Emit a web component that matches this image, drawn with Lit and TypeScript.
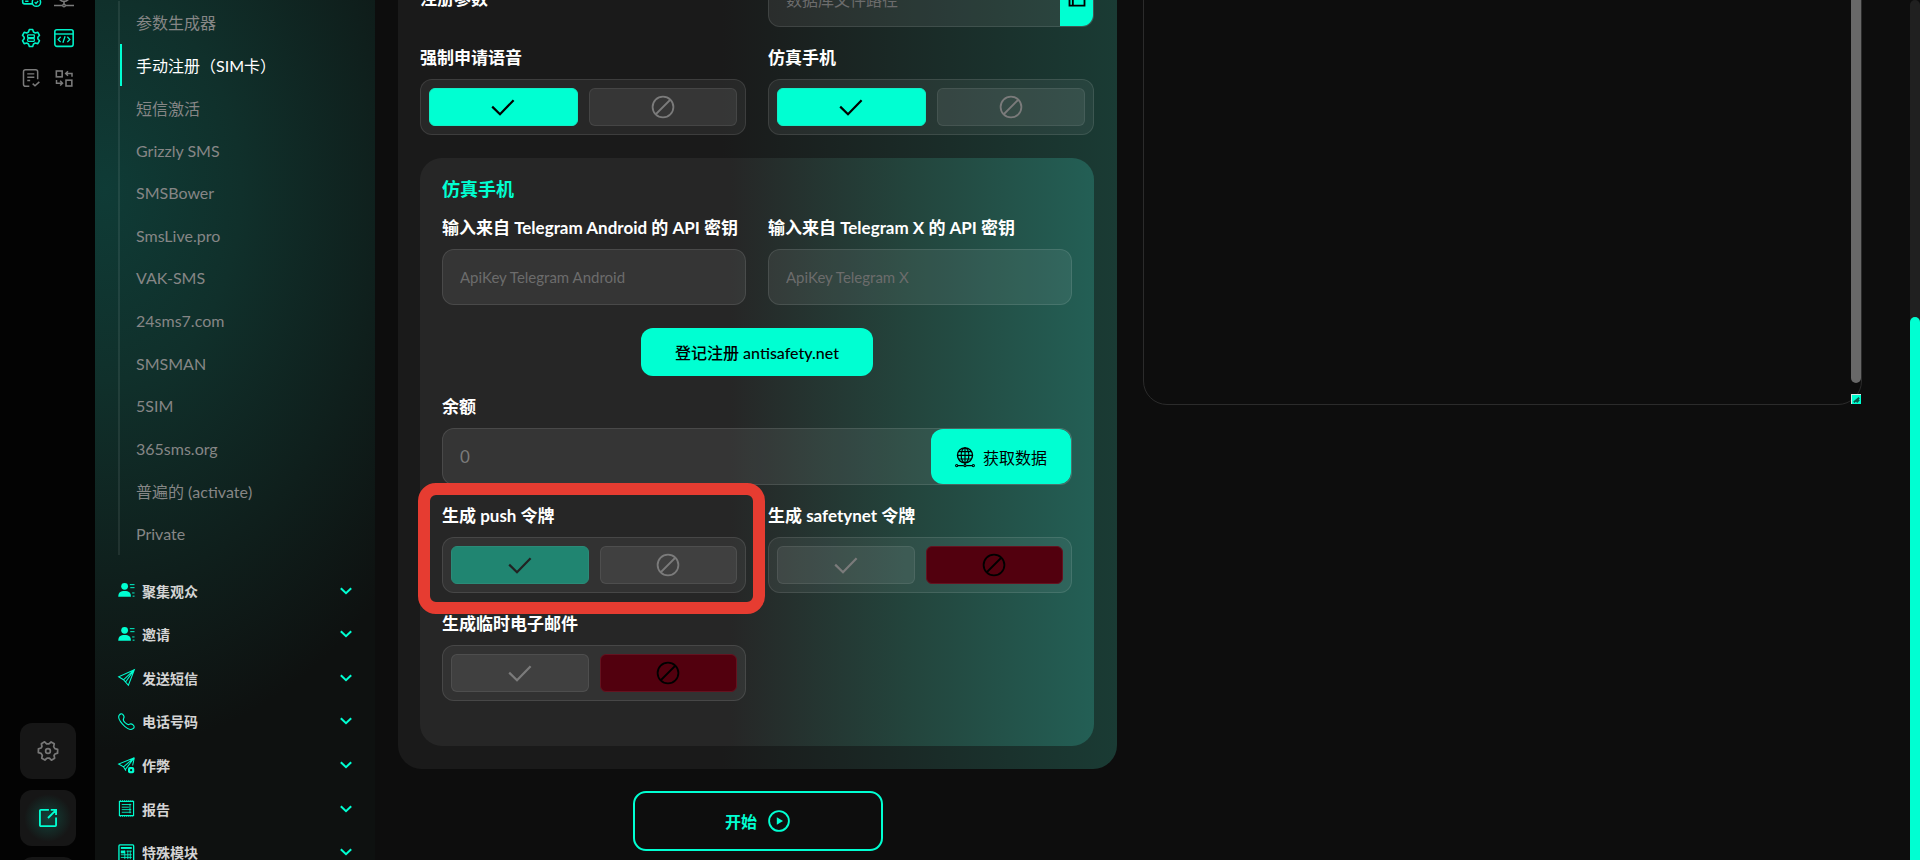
import { LitElement, html, css, svg } from "lit";
import { customElement, state } from "lit/decorators.js";
import { classMap } from "lit/directives/class-map.js";

const icon = (body: unknown, cls = "", box = "0 0 24 24") =>
  html`<svg class=${"icon " + cls} viewBox=${box} aria-hidden="true">${body}</svg>`;

const check = svg`<path d="M1.2 11.6 L9 19.2 L22.6 5.2" stroke-width="2.2"/>`;
const ban = svg`<circle cx="12" cy="12" r="10.4" stroke-width="1.8"/><path d="M5 19 L19 5" stroke-width="1.8"/>`;
const user = svg`<circle class="solid" cx="7" cy="4.6" r="3.6"/><path class="solid" d="M.3 15.5 C.3 11.3 2.6 9.6 7 9.6 S13.7 11.3 13.7 15.5 Z"/><path d="M12.5 2.8H17.5M13 6H17.5M15 11.6H17.5M15.5 15H17.5" stroke-width="1"/>`;
const plane = svg`<path d="M17.3 .7 L.7 8.2 L5.8 11.4 L11 17.2 Z M17.3 .7 L5.8 11.4 M17.3 .7 L8 13.8" stroke-width="1.1"/>`;
const phone = svg`<path d="M1 2.6 C2.4 .6 4 .4 5 1.5 C6.6 3.2 7 4.3 6 5.6 C5 6.9 5.2 7.7 7.2 9.9 C9.6 12.3 10.6 12.9 12 12 C13.4 11 14.4 11.2 16.2 12.8 C17.6 14.2 17.4 15.6 15.6 16.8 C12.8 18.4 8.2 15.8 4.8 11.8 C1.6 8.2 .1 4.6 1 2.6 Z" stroke-width="1.2"/>`;
const planeLock = svg`<path d="M17.3 .7 L.7 7.4 L5.8 10.4 L8.4 14.4 M17.3 .7 L5.8 10.4 M17.3 .7 L8 13 M17.3 .7 L15.5 9" stroke-width="1.1"/><rect class="solid" x="10.6" y="10.6" width="6.6" height="6.6" rx="2"/><circle cx="13.9" cy="13.9" r="1.2" class="hole"/>`;
const report = svg`<rect x="1.5" y="1.5" width="15" height="15" stroke-width="1.2"/><path d="M2 .7H16M2 17.3H16" stroke-width=".9" stroke-dasharray="1.2 1"/><path d="M4 4.8H14M4 7.6H11.5M4 10.2H14M4 13H14M12.7 4V14" stroke-width=".9"/>`;
const modules = svg`<rect x="1" y="1" width="15.6" height="18" rx="1" stroke-width="1.4"/><path d="M3 4.2H14.6" stroke-width="2"/><path d="M3 8.4H7.5" stroke-width="3"/><path d="M9 7.6H14.6M3 11.4H14.6M3 14.2H14.6M10.4 7V16M13 7V16M7.2 7V16" stroke-width=".9"/>`;
const chevron = svg`<path d="M.8 1.2 L6 6.2 L11.2 1.2" stroke-width="2"/>`;
const cog = "M10 1.8 L14 1.8 L15 4.8 L17.2 6 L20.2 5.2 L22.2 8.8 L20.2 11 L20.2 13 L22.2 15.2 L20.2 18.8 L17.2 18 L15 19.2 L14 22.2 L10 22.2 L9 19.2 L6.8 18 L3.8 18.8 L1.8 15.2 L3.8 13 L3.8 11 L1.8 8.8 L3.8 5.2 L6.8 6 L9 4.8 Z";
const card = svg`<rect x="2" y="4" width="19" height="15" rx="2.5" stroke-width="1.9"/><path d="M2 13H12M5 16H9" stroke-width="1.7"/><circle class="back" cx="18.5" cy="17" r="5" stroke-width="1.8"/><path d="M16.4 17 L18 18.6 L20.6 15.6" stroke-width="1.5"/>`;
const network = svg`<circle cx="12" cy="9" r="7" stroke-width="1.9"/><path d="M12 16V21M0 21H10M14 21H24" stroke-width="1.8"/><circle cx="12" cy="21" r="1.7" stroke-width="1.4"/>`;
const gearServer = svg`<path d=${cog} stroke-width="1.9" stroke-linejoin="round"/><rect x="8" y="8.2" width="8" height="3.4" rx=".6" stroke-width="1.5"/><rect x="8" y="12.6" width="8" height="3.4" rx=".6" stroke-width="1.5"/>`;
const code = svg`<rect x="1" y="2" width="22" height="20" rx="2.5" stroke-width="1.9"/><path d="M1 7.2H23" stroke-width="1.7"/><path d="M8 10.5 L5 13.8 L8 17 M16 10.5 L19 13.8 L16 17 M13.3 10 L10.7 17.6" stroke-width="1.6"/>`;
const docCheck = svg`<path d="M10 22H5.5A2.5 2.5 0 0 1 3 19.5V4.5A2.5 2.5 0 0 1 5.5 2H17.5A2.5 2.5 0 0 1 20 4.5V13.5" stroke-width="1.8"/><path d="M7.5 7H16M7.5 11H16M7.5 15H11" stroke-width="1.7"/><path d="M14 18.8 L16.8 21.4 L22 16.6" stroke-width="1.8"/>`;
const swap = svg`<rect x="2.8" y="3.6" width="7" height="7" stroke-width="1.9"/><rect x="14.4" y="14.6" width="7" height="7" stroke-width="1.9"/><path d="M21.6 10.4V6.6H14.4M16.8 3.8 L14 6.6 L16.8 9.4 M3 14.4V18.2H10M7.4 15.4 L10.2 18.2 L7.4 21" stroke-width="1.8"/>`;
const gear = svg`<g transform="rotate(30 12 12)"><path d=${cog} stroke-width="1.9" stroke-linejoin="round"/></g><circle cx="12" cy="12" r="2.6" stroke-width="1.8"/>`;
const external = svg`<path d="M13 3.2H4.2A1 1 0 0 0 3.2 4.2V19.8A1 1 0 0 0 4.2 20.8H19.8A1 1 0 0 0 20.8 19.8V11.5M15 3.2H20.8V8.8M20.4 3.6 L12 12" stroke-width="2"/>`;
const globe = svg`<circle cx="12" cy="10" r="9" stroke-width="1.7"/><ellipse cx="12" cy="10" rx="4.6" ry="9" stroke-width="1.4"/><path d="M12 1V22M3 10H21M4.4 5.6H19.6M4.4 14.4H19.6" stroke-width="1.4"/><path d="M3.5 22.3H10.5M13.5 22.3H20.5" stroke-width="1.5"/><circle cx="2" cy="22.3" r="1.3" stroke-width="1.3"/><circle cx="12" cy="22.3" r="1.3" stroke-width="1.3"/><circle cx="22" cy="22.3" r="1.3" stroke-width="1.3"/>`;
const play = svg`<circle cx="12" cy="12" r="10.8" stroke-width="2"/><path class="solid" d="M9.6 7.8 L16.4 12 L9.6 16.2 Z"/>`;
const folder = svg`<path d="M3 4H9L11 7H21V20H3Z M7 20V10H22" stroke-width="2.2"/>`;

const shared = css`
  *, *::before, *::after { box-sizing: border-box; }
  .icon { fill: none; stroke: currentColor; display: block; flex: none; overflow: visible; }
  .solid { fill: currentColor; stroke: none; }
  .hole { fill: #0d1716; stroke: none; }
  .back { fill: #030303; }
  button { font: inherit; color: inherit; background: none; border: 0; padding: 0; cursor: pointer; }
  a { color: inherit; text-decoration: none; }
`;

@customElement("icon-rail")
class IconRail extends LitElement {
  static styles = [shared, css`
    :host { display: flex; flex-direction: column; justify-content: space-between; background: #030303; overflow: hidden; }
    .shortcuts { display: grid; grid-template-columns: repeat(2, 22px); column-gap: 11px; row-gap: 18px; margin: -13px 0 0 20px; }
    .shortcuts button { height: 22px; display: grid; place-items: center; color: #7b7b7b; }
    .shortcuts .on { color: #00f0c8; }
    .shortcuts .icon { width: 20px; height: 20px; }
    .bottom { display: flex; flex-direction: column; gap: 11px; align-items: center; margin-bottom: -53px; }
    .tile { width: 56px; height: 56px; border-radius: 12px; background: #161616; color: #777; display: grid; place-items: center; }
    .tile .icon { width: 22px; height: 22px; }
    .tile.on { color: #00ffd2; background: radial-gradient(circle, #134139 0, #161616 60%); }
  `];
  render() {
    const top = [
      ["银行卡", card, true], ["网络", network, false],
      ["服务器", gearServer, true], ["代码", code, true],
      ["任务", docCheck, false], ["转换", swap, false],
    ] as const;
    return html`
      <div class="shortcuts">${top.map(([name, body, on]) => html`
        <button aria-label=${name} class=${classMap({ on })}>${icon(body)}</button>`)}</div>
      <div class="bottom">
        <button class="tile" aria-label="设置">${icon(gear)}</button>
        <button class="tile on" aria-label="打开">${icon(external)}</button>
        <button class="tile" aria-label="更多"></button>
      </div>`;
  }
}

@customElement("side-menu")
class SideMenu extends LitElement {
  static styles = [shared, css`
    :host {
      display: block; overflow: hidden;
      background: radial-gradient(400px 560px at 10px 190px, #0f3b36 0, #10302b 34%, #0f1f1c 70%, #0e1110 100%);
    }
    ul { list-style: none; margin: 0; padding: 0; display: grid; grid-auto-rows: 1fr; }
    .sub { height: 554px; margin: 1px 24px 0 23px; border-left: 2px solid rgba(255, 255, 255, .08); }
    .sub a { display: flex; align-items: center; height: 100%; padding-left: 14px; border-left: 2px solid transparent; font-size: 16px; color: #868686; }
    .sub .active { color: #fff; border-left-color: #00ffd2; }
    .groups { height: 305px; margin: 14px 23px 0; }
    .groups button { display: flex; align-items: center; gap: 7px; width: 100%; height: 100%; font-size: 14px; font-weight: 700; color: #d4d4d4; text-align: left; }
    .groups .icon { width: 17px; height: 17px; color: #00ffd2; }
    .groups span { flex: 1; }
    .groups .chev { width: 12px; height: 8px; }
  `];
  render() {
    const sub = ["参数生成器", "手动注册（SIM卡）", "短信激活", "Grizzly SMS", "SMSBower", "SmsLive.pro", "VAK-SMS",
      "24sms7.com", "SMSMAN", "5SIM", "365sms.org", "普遍的 (activate)", "Private"];
    const groups = [["聚集观众", user], ["邀请", user], ["发送短信", plane], ["电话号码", phone],
      ["作弊", planeLock], ["报告", report], ["特殊模块", modules]] as const;
    return html`
      <ul class="sub">${sub.map((t, i) => html`<li><a href="#" class=${classMap({ active: i === 1 })}>${t}</a></li>`)}</ul>
      <ul class="groups">${groups.map(([t, g]) => html`
        <li><button>${icon(g, "", "0 0 18 18")}<span>${t}</span>${icon(chevron, "chev", "0 0 12 8")}</button></li>`)}</ul>`;
  }
}

@customElement("yes-no")
class YesNo extends LitElement {
  static properties = { label: {}, value: { type: Boolean }, dim: { type: Boolean } };
  declare label: string;
  declare value: boolean;
  declare dim: boolean;
  static styles = [shared, css`
    :host { display: block; }
    .name { font-size: 17px; line-height: 24px; font-weight: 700; color: #fff; margin-bottom: 9px; white-space: nowrap; }
    .box { display: grid; grid-template-columns: 1fr 1fr; gap: 11px; height: 56px; padding: 8px; border: 1px solid rgba(255, 255, 255, .1); border-radius: 12px; background: rgba(255, 255, 255, .06); }
    label { position: relative; display: grid; place-items: center; border: 1px solid rgba(255, 255, 255, .08); border-radius: 6px; background: rgba(255, 255, 255, .07); color: #7b7b7b; cursor: pointer; }
    input { position: absolute; inset: 0; margin: 0; opacity: 0; width: 100%; height: 100%; cursor: inherit; }
    .icon { width: 24px; height: 24px; }
    .yes:has(:checked) { background: #00ffd2; color: #000; border-color: #10eec6; }
    .no:has(:checked) { background: #52000e; color: #000; border-color: #641320; }
    .dim .yes:has(:checked) { background: #208571; color: #222; border-color: #2a8b78; }
  `];
  render() {
    const pick = (v: boolean) => () => { this.value = v; };
    return html`
      <div class="name" id="n">${this.label}</div>
      <div class=${classMap({ box: true, dim: this.dim })} role="radiogroup" aria-labelledby="n">
        <label class="yes"><input type="radio" name="v" aria-label="是" .checked=${this.value} @change=${pick(true)}>${icon(check)}</label>
        <label class="no"><input type="radio" name="v" aria-label="否" .checked=${!this.value} @change=${pick(false)}>${icon(ban)}</label>
      </div>`;
  }
}

@customElement("app-root")
class AppRoot extends LitElement {
  @state() private log = "";
  static styles = [shared, css`
    :host {
      display: grid; grid-template-columns: 95px 280px minmax(0, 1fr) 10px; grid-template-rows: 100vh;
      background: #0d0d0d; color: #fff; overflow: hidden;
      font-family: Lato, "Noto Sans CJK SC", sans-serif;
    }
    main { display: grid; grid-template-columns: minmax(0, 1fr) minmax(0, 1fr); column-gap: 26px; align-items: start; padding: 0 48px 0 23px; overflow: hidden; }
    .form { margin-top: -59px; display: flex; flex-direction: column; align-items: center; gap: 22px; }
    .card { align-self: stretch; padding: 30px 23px 23px 22px; border-radius: 24px; background: linear-gradient(90deg, #1a1a1a 45%, #1a3b34); }
    .grid { display: grid; grid-template-columns: 1fr 1fr; gap: 19px 22px; }
    label { display: block; font-size: 17px; line-height: 24px; font-weight: 700; white-space: nowrap; }
    .file { align-items: center; }
    .field label { margin-bottom: 9px; }
    .inner { margin-top: 23px; padding: 19px 22px 45px; border-radius: 22px; background: linear-gradient(90deg, #262626 46%, #23443c 72%, #235f55); }
    h2 { margin: 0 0 15px; font-size: 18px; line-height: 24px; font-weight: 700; color: #00ffd2; }
    .text { width: 100%; height: 56px; padding: 0 17px; border: 1px solid rgba(255, 255, 255, .1); border-radius: 12px; background: rgba(255, 255, 255, .07); color: #7b7b7b; font: 400 15px Lato, "Noto Sans CJK SC", sans-serif; outline: 0; }
    .text::placeholder { color: #6c6c6c; opacity: 1; }
    .group { display: flex; height: 57px; border: 1px solid rgba(255, 255, 255, .1); border-radius: 12px; background: rgba(255, 255, 255, .07); overflow: hidden; }
    .group .text { flex: 1; min-width: 0; height: auto; border: 0; background: none; }
    .group.short { height: 56px; }
    .browse { width: 33px; display: grid; place-items: center; background: #00ffd2; color: #000; }
    .browse .icon { width: 20px; height: 20px; }
    .fetch { display: flex; align-items: center; justify-content: center; gap: 8px; width: 140px; border-radius: 12px; background: #00ffd2; color: #000; font-size: 16px; font-weight: 400; }
    .fetch .icon { width: 20px; height: 24px; }
    .center { display: flex; justify-content: center; margin: 23px 0 19px; }
    .signup { height: 48px; padding: 0 34px; border-radius: 12px; background: #00ffd2; color: #000; font-size: 16px; font-weight: 500; }
    .wide { margin-bottom: 19px; }
    .group .file-path { font-size: 16px; }
    .group .num { font-size: 17px; }
    .marked { position: relative; }
    .mark { position: absolute; inset: -21px -19px -21px -24px; border: 12px solid #e63c31; border-radius: 18px; pointer-events: none; z-index: 1; }
    .start { display: flex; align-items: center; justify-content: center; gap: 11px; width: 250px; height: 60px; border: 2px solid #00ffd2; border-radius: 13px; color: #00ffd2; font-size: 16px; font-weight: 700; }
    .start .icon { width: 22px; height: 22px; }
    .console { position: relative; height: 465px; margin-top: -60px; }
    .console textarea { display: block; width: 100%; height: 100%; padding: 20px; border: 1px solid #2b2b2b; border-radius: 24px; background: none; color: #ddd; resize: none; outline: 0; overflow: hidden; }
    .thumb { position: absolute; top: 0; right: 1px; bottom: 22px; width: 10px; border-radius: 5px; background: #686868; }
    .grip { position: absolute; right: 1px; bottom: 1px; width: 10px; height: 10px; background: #00ffd2; border: solid #d8e8e4; border-width: 1px 0 0 1px; color: #0a5c4e; }
    .grip .icon { width: 9px; height: 9px; }
    .scroll { background: #202020; border-radius: 5px 5px 0 0; display: flex; align-items: flex-end; }
    .scroll div { width: 100%; height: calc(100% - 317px); border-radius: 5px 5px 0 0; background: #00ffd2; }
  `];
  render() {
    return html`
      <icon-rail></icon-rail>
      <side-menu></side-menu>
      <main>
        <section class="form">
          <div class="card">
            <div class="grid file">
              <label for="db">注册参数</label>
              <div class="group short">
                <input class="text file-path" id="db" placeholder="数据库文件路径">
                <button class="browse" aria-label="选择文件">${icon(folder)}</button>
              </div>
              <yes-no .label=${"强制申请语音"} .value=${true}></yes-no>
              <yes-no .label=${"仿真手机"} .value=${true}></yes-no>
            </div>
            <section class="inner">
              <h2>仿真手机</h2>
              <div class="grid">
                <div class="field"><label for="ka">输入来自 Telegram Android 的 API 密钥</label><input class="text" id="ka" placeholder="ApiKey Telegram Android"></div>
                <div class="field"><label for="kx">输入来自 Telegram X 的 API 密钥</label><input class="text" id="kx" placeholder="ApiKey Telegram X"></div>
              </div>
              <div class="center"><button class="signup">登记注册 antisafety.net</button></div>
              <div class="field wide">
                <label for="bal">余额</label>
                <div class="group">
                  <input class="text num" id="bal" .value=${"0"}>
                  <button class="fetch">${icon(globe)}获取数据</button>
                </div>
              </div>
              <div class="grid">
                <div class="marked"><yes-no .label=${"生成 push 令牌"} .value=${true} .dim=${true}></yes-no><div class="mark"></div></div>
                <yes-no .label=${"生成 safetynet 令牌"} .value=${false}></yes-no>
                <yes-no .label=${"生成临时电子邮件"} .value=${false}></yes-no>
              </div>
            </section>
          </div>
          <button class="start">开始${icon(play)}</button>
        </section>
        <section class="console">
          <textarea aria-label="日志" readonly .value=${this.log}></textarea>
          <div class="thumb"></div>
          <div class="grip">${icon(svg`<path d="M2 8 L8 3 M5 8 L8 5.4" stroke-width="2"/>`, "", "0 0 10 10")}</div>
        </section>
      </main>
      <div class="scroll"><div></div></div>`;
  }
}
